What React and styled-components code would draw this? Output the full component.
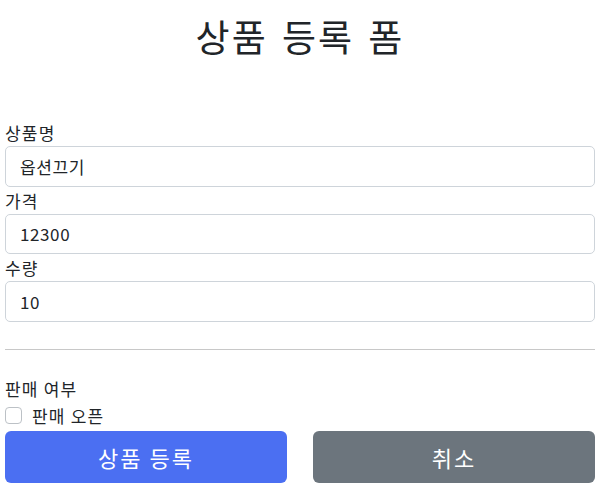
import styled, { createGlobalStyle } from "styled-components";

const GlobalStyle = createGlobalStyle`
  body {
    margin: 0;
    background: #fff;
    color: #212529;
    font-family: "Noto Sans CJK KR", "Noto Sans", sans-serif;
  }
  * { box-sizing: border-box; }
`;

const Page = styled.div`
  padding: 0 15px 0 5px;
  letter-spacing: 1.2px;
`;

const Header = styled.div`
  height: 72px;
  margin-bottom: 47px;
  display: flex;
  align-items: center;
  justify-content: center;
  h2 {
    margin: 0;
    font-size: 37px;
    font-weight: 400;
    line-height: 1;
    letter-spacing: 2px;
    word-spacing: 4px;
  }
`;

const Label = styled.label`
  display: block;
  font-size: 17px;
  line-height: 27px;
`;

const Input = styled.input`
  display: block;
  width: 100%;
  height: 40.5px;
  padding: 0 14px;
  border: 1px solid #ced4da;
  border-radius: 5px;
  font: inherit;
  font-size: 17px;
  letter-spacing: 0.6px;
  color: #212529;
  outline: none;
`;

const Divider = styled.hr`
  margin: 27px 0 25px;
  border: 0;
  border-top: 1px solid #c8c8c8;
`;

const CheckRow = styled.label`
  display: flex;
  align-items: center;
  gap: 10px;
  height: 27px;
  font-size: 17px;
`;

const Check = styled.input`
  appearance: none;
  width: 17px;
  height: 17px;
  margin: 0;
  border: 1px solid #bcc1c6;
  border-radius: 4px;
  background: #fff;
`;

const Buttons = styled.div`
  display: grid;
  grid-template-columns: 1fr 1fr;
  gap: 26px;
  margin-top: 2.5px;
`;

const Button = styled.button`
  height: 52px;
  border: 0;
  border-radius: 6px;
  font: inherit;
  font-size: 22px;
  letter-spacing: 2px;
  color: #fff;
  background: ${(p) => (p.$variant === "secondary" ? "#6c757d" : "#4b6ff2")};
`;

export default function App() {
  return (
    <Page>
      <GlobalStyle />
      <Header>
        <h2>상품 등록 폼</h2>
      </Header>
      <form onSubmit={(e) => e.preventDefault()}>
        <div>
          <Label htmlFor="itemName">상품명</Label>
          <Input id="itemName" defaultValue="옵션끄기" />
        </div>
        <div>
          <Label htmlFor="price">가격</Label>
          <Input id="price" defaultValue="12300" />
        </div>
        <div>
          <Label htmlFor="quantity">수량</Label>
          <Input id="quantity" defaultValue="10" />
        </div>

        <Divider />

        <Label as="div">판매 여부</Label>
        <CheckRow>
          <Check type="checkbox" />
          판매 오픈
        </CheckRow>

        <Buttons>
          <Button type="submit">상품 등록</Button>
          <Button type="button" $variant="secondary">취소</Button>
        </Buttons>
      </form>
    </Page>
  );
}
